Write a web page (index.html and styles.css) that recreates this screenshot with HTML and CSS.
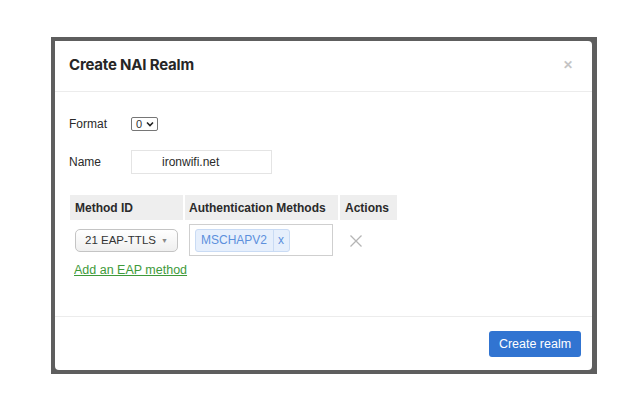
FILE: index.html
```html
<!DOCTYPE html>
<html>
<head>
<meta charset="utf-8">
<link rel="stylesheet" href="styles.css">
</head>
<body>
<div class="frame">
  <div class="modal">
    <div class="modal-header">
      <h1 class="title">Create NAI Realm</h1>
      <span class="close">&#x2715;</span>
    </div>
    <div class="modal-body">
      <div class="field field-format">
        <span class="label">Format</span>
        <span class="mini-select">0<svg class="chev" width="8" height="6" viewBox="0 0 8 6"><path d="M1 1.5 L4 4.5 L7 1.5" fill="none" stroke="#222" stroke-width="1.6"/></svg></span>
      </div>
      <div class="field field-name">
        <span class="label">Name</span>
        <span class="text-input">ironwifi.net</span>
      </div>
      <table class="methods">
        <thead>
          <tr>
            <th class="col-id">Method ID</th>
            <th class="col-auth">Authentication Methods</th>
            <th class="col-act">Actions</th>
          </tr>
        </thead>
        <tbody>
          <tr>
            <td class="cell-id"><span class="eap-select">21 EAP-TTLS<span class="caret">&#9660;</span></span></td>
            <td class="cell-auth">
              <div class="tag-box"><span class="tag"><span class="tag-text">MSCHAPV2</span><span class="tag-x">x</span></span></div>
            </td>
            <td class="cell-act"><svg width="12" height="12" viewBox="0 0 12 12"><path d="M0.5 0.5 L11.5 11.5 M11.5 0.5 L0.5 11.5" stroke="#b5b5b5" stroke-width="1.3"/></svg></td>
          </tr>
        </tbody>
      </table>
      <a class="add-link" href="#">Add an EAP method</a>
    </div>
    <div class="modal-footer">
      <button class="btn-primary">Create realm</button>
    </div>
  </div>
</div>
</body>
</html>
```

FILE: styles.css
```css
html, body {
  margin: 0;
  padding: 0;
  background: #ffffff;
}
body {
  padding: 37px 0 0 51px;
  font-family: "Liberation Sans", Arial, sans-serif;
  color: #222;
}
.frame {
  width: 546px;
  height: 337px;
  box-sizing: border-box;
  background: #5e5e5e;
  padding: 4px 5px 4px 4px;
}
.modal {
  background: #fff;
  height: 100%;
  border-radius: 0 4px 4px 4px;
  display: flex;
  flex-direction: column;
}
.modal-header {
  height: 51px;
  box-sizing: border-box;
  border-bottom: 1px solid #ececec;
  display: flex;
  align-items: center;
  justify-content: space-between;
  padding: 0 19px 0 14px;
}
.title {
  margin: 0;
  font-family: "Inter", "Liberation Sans", sans-serif;
  font-weight: 700;
  font-size: 15px;
  letter-spacing: -0.2px;
  color: #262626;
  padding-bottom: 4px;
}
.close {
  color: #c4c4c4;
  font-size: 12px;
  font-weight: 700;
  padding-bottom: 2px;
}
.modal-body {
  flex: 1;
  padding: 25px 14px 0 14px;
  border-bottom: 1px solid #ececec;
}
.field {
  display: flex;
  align-items: center;
  font-size: 12px;
}
.label {
  width: 62px;
  color: #2a2a2a;
}
.mini-select {
  display: inline-flex;
  align-items: center;
  gap: 4px;
  height: 14px;
  box-sizing: border-box;
  border: 1px solid #767676;
  border-radius: 2px;
  padding: 0 3px 0 4px;
  font-size: 11px;
  color: #333;
}
.field-name {
  margin-top: 19px;
}
.text-input {
  width: 141px;
  height: 24px;
  box-sizing: border-box;
  border: 1px solid #e4e4e4;
  padding: 0 0 0 30px;
  display: flex;
  align-items: center;
  font-size: 12px;
  color: #2a2a2a;
}
.methods {
  margin-top: 19px;
  margin-left: -1px;
  border-collapse: separate;
  border-spacing: 2px;
}
.methods th {
  background: #eeeeee;
  height: 25px;
  padding: 0 5px;
  text-align: left;
  font-size: 12px;
  font-weight: 700;
  color: #2a2a2a;
  box-sizing: border-box;
  white-space: nowrap;
}
.col-id { width: 113px; }
.col-auth { width: 153px; padding-left: 4px !important; }
.col-act { width: 57px; }
.methods td {
  padding: 0;
  vertical-align: middle;
  height: 36px;
}
.cell-id {
  padding-left: 5px !important;
}
.eap-select {
  display: flex;
  align-items: center;
  justify-content: space-between;
  white-space: nowrap;
  width: 103px;
  height: 23px;
  box-sizing: border-box;
  border: 1px solid #c4c4c4;
  border-radius: 5px;
  background: linear-gradient(#ffffff, #efefef);
  padding: 0 9px 0 9px;
  font-size: 11.5px;
  color: #333;
}
.caret {
  font-size: 7px;
  color: #888;
}
.cell-auth {
  padding-left: 4px !important;
}
.tag-box {
  width: 144px;
  height: 32px;
  box-sizing: border-box;
  border: 1px solid #cfcfcf;
  padding: 4px 5px;
  display: flex;
  align-items: center;
}
.tag {
  display: inline-flex;
  align-items: stretch;
  height: 23px;
  box-sizing: border-box;
  border: 1px solid #c9dbf4;
  border-radius: 3px;
  background: #e6effc;
  color: #5c90dc;
  font-size: 12px;
  white-space: nowrap;
}
.tag-text {
  display: flex;
  align-items: center;
  padding: 0 6px 0 5px;
  border-right: 1px solid #c9dbf4;
}
.tag-x {
  display: flex;
  align-items: center;
  padding: 0 5px 0 4px;
  font-size: 12px;
}
.cell-act {
  padding-left: 10px !important;
}
.cell-act svg {
  display: block;
  margin-top: 1px;
}
.add-link {
  display: inline-block;
  margin-top: 2px;
  margin-left: 5px;
  font-size: 12.5px;
  color: #3e9a3a;
  text-decoration: underline;
}
.modal-footer {
  height: 53px;
  display: flex;
  align-items: center;
  justify-content: flex-end;
  padding-right: 11px;
}
.btn-primary {
  width: 92px;
  height: 26px;
  border: none;
  border-radius: 3px;
  background: #3174d1;
  color: #fff;
  font-family: "Liberation Sans", Arial, sans-serif;
  font-size: 12.5px;
  margin-top: 1px;
}
```
